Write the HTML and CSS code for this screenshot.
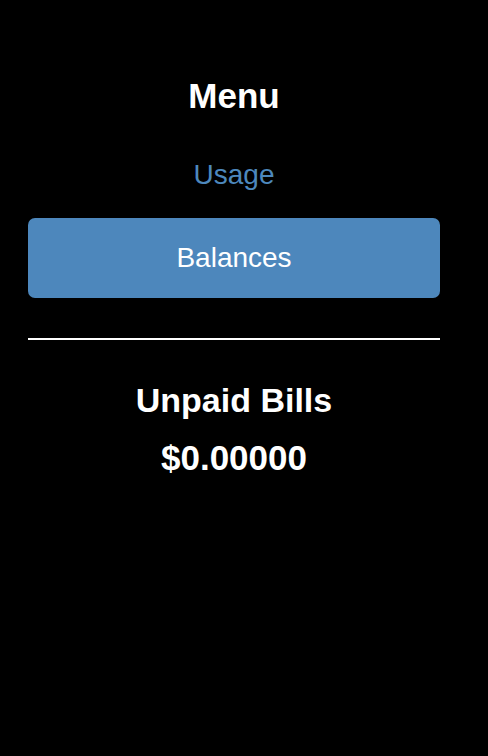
FILE: index.html
```html
<!DOCTYPE html>
<html>
<head>
<meta charset="utf-8">
<link rel="stylesheet" href="styles.css">
</head>
<body>
<div class="page">
  <h2 class="title">Menu</h2>
  <a class="link">Usage</a>
  <div class="btn">Balances</div>
  <hr class="divider">
  <h2 class="section">Unpaid Bills</h2>
  <div class="amount">$0.00000</div>
</div>
</body>
</html>
```
FILE: styles.css
```css
html, body {
  margin: 0;
  padding: 0;
  background: #000;
}
.page {
  display: flex;
  flex-direction: column;
  align-items: stretch;
  padding: 74px 48px 0 28px;
  font-family: "Liberation Sans", Arial, sans-serif;
  color: #fff;
  text-align: center;
}
.title {
  margin: 0;
  font-size: 35px;
  font-weight: bold;
  line-height: 44px;
}
.link {
  margin-top: 39px;
  font-size: 28px;
  line-height: 36px;
  color: #4d88bd;
}
.btn {
  margin-top: 25px;
  height: 80px;
  line-height: 80px;
  background: #4d87bc;
  border-radius: 7px;
  font-size: 28px;
  color: #fff;
}
.divider {
  margin: 40px 0 0 0;
  border: 0;
  height: 2px;
  background: #fff;
}
.section {
  margin: 38px 0 0 0;
  font-size: 34px;
  font-weight: bold;
  line-height: 44px;
}
.amount {
  margin-top: 14px;
  font-size: 35px;
  font-weight: bold;
  line-height: 44px;
}
```
